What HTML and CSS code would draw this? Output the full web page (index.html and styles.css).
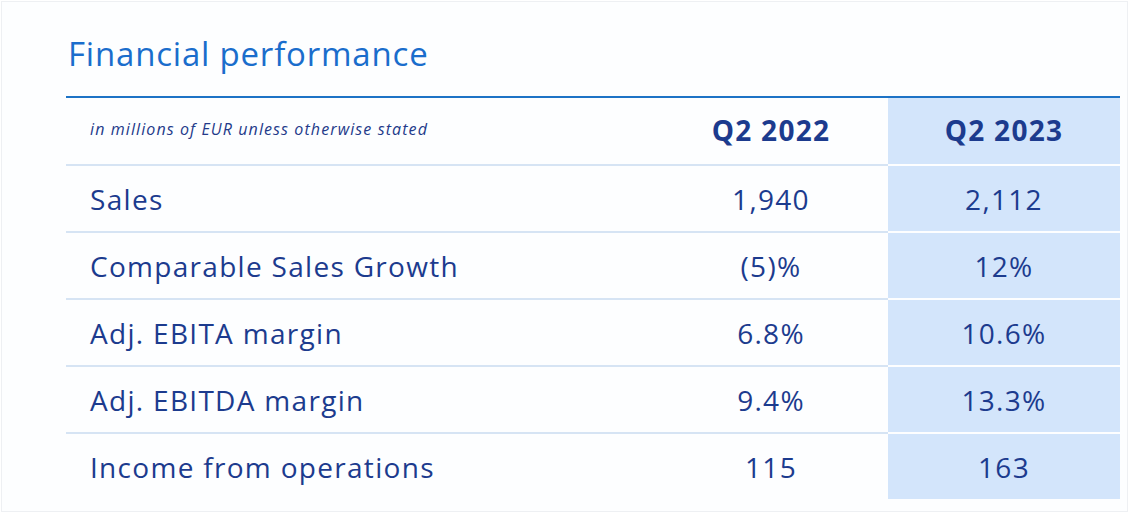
FILE: index.html
```html
<!DOCTYPE html>
<html lang="en">
<head>
<meta charset="utf-8">
<title>Financial performance</title>
<link rel="stylesheet" href="styles.css">
</head>
<body>
<div class="slide">
  <h1 class="title">Financial performance</h1>
  <div class="table">
    <div class="cell label note">in millions of EUR unless otherwise stated</div>
    <div class="cell num head">Q2 2022</div>
    <div class="cell num head hl">Q2 2023</div>

    <div class="cell label">Sales</div>
    <div class="cell num">1,940</div>
    <div class="cell num hl">2,112</div>

    <div class="cell label">Comparable Sales Growth</div>
    <div class="cell num">(5)%</div>
    <div class="cell num hl">12%</div>

    <div class="cell label">Adj. EBITA margin</div>
    <div class="cell num">6.8%</div>
    <div class="cell num hl">10.6%</div>

    <div class="cell label">Adj. EBITDA margin</div>
    <div class="cell num">9.4%</div>
    <div class="cell num hl">13.3%</div>

    <div class="cell label">Income from operations</div>
    <div class="cell num">115</div>
    <div class="cell num hl">163</div>
  </div>
</div>
</body>
</html>
```

FILE: styles.css
```css
html, body {
  margin: 0;
  padding: 0;
  background: #ffffff;
}

body {
  width: 1132px;
  height: 514px;
  overflow: hidden;
  font-family: "Open Sans", "Noto Sans", sans-serif;
}

.slide {
  box-sizing: border-box;
  width: 1127px;
  height: 511px;
  margin: 1px 0 0 1px;
  border: 1px solid #eef0f3;
  background: #fdfeff;
  padding: 0 0 0 64px;
}

.title {
  margin: 0;
  padding: 32px 0 0 2px;
  height: 94px;
  box-sizing: border-box;
  font-weight: 400;
  font-size: 33px;
  line-height: 40px;
  color: #1a6dcc;
  letter-spacing: 0.8px;
}

.table {
  width: 1054px;
  display: grid;
  grid-template-columns: 588px 234px 232px;
  grid-template-rows: 66px repeat(5, 67px);
  border-top: 2px solid #1d73c6;
}

.cell {
  display: flex;
  align-items: center;
  box-sizing: border-box;
  color: #1c3b8e;
  font-size: 28px;
  letter-spacing: 1.3px;
  border-top: 2px solid #d6e4f4;
}

.table > .cell:nth-child(-n+3) {
  border-top: 0;
}

.label {
  padding-left: 24px;
}

.num {
  justify-content: center;
}

.hl {
  background: #d3e5fb;
  background-clip: padding-box;
  border-top-color: transparent;
}

.note {
  font-size: 16px;
  font-style: italic;
  letter-spacing: 1.1px;
  align-items: flex-start;
  padding-top: 20px;
  color: #233a8a;
}

.head {
  font-weight: 700;
  padding-bottom: 2px;
}
```
